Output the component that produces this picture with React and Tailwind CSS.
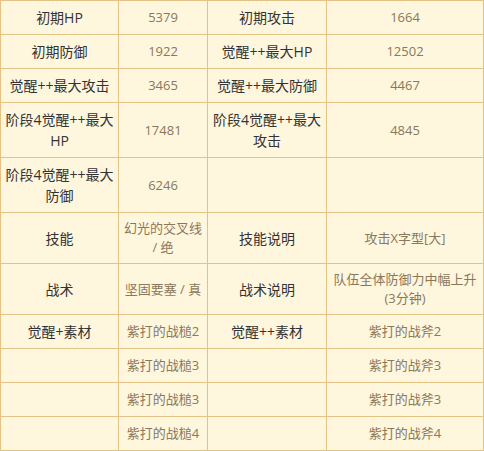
import React from "react";

const rows = [
  ["初期HP", "5379", "初期攻击", "1664"],
  ["初期防御", "1922", "觉醒++最大HP", "12502"],
  ["觉醒++最大攻击", "3465", "觉醒++最大防御", "4467"],
  ["阶段4觉醒++最大HP", "17481", "阶段4觉醒++最大攻击", "4845"],
  ["阶段4觉醒++最大防御", "6246", "", ""],
  ["技能", "幻光的交叉线 / 绝", "技能说明", "攻击X字型[大]"],
  ["战术", "坚固要塞 / 真", "战术说明", "队伍全体防御力中幅上升(3分钟)"],
  ["觉醒+素材", "紫打的战槌2", "觉醒++素材", "紫打的战斧2"],
  ["", "紫打的战槌3", "", "紫打的战斧3"],
  ["", "紫打的战槌3", "", "紫打的战斧3"],
  ["", "紫打的战槌4", "", "紫打的战斧4"],
];

export default function App() {
  return (
    <div
      className="w-[484px] h-[451px] bg-white"
      style={{ fontFamily: '"Open Sans", "Noto Sans CJK SC", sans-serif' }}
    >
      <table className="border-collapse table-fixed w-[483px] bg-[#fff6de]">
        <colgroup>
          <col className="w-[118px]" />
          <col className="w-[89px]" />
          <col className="w-[119px]" />
          <col className="w-[157px]" />
        </colgroup>
        <tbody>
          {rows.map((r, i) => (
            <tr key={i}>
              {r.map((c, j) => {
                const label = j % 2 === 0;
                return (
                  <td
                    key={j}
                    className={
                      label
                        ? "border border-[#e2c384] text-center align-middle px-[1px] py-[6px] text-[14px] leading-[21px] text-[#333333]"
                        : "border border-[#e2c384] text-center align-middle px-[1px] py-[6px] text-[13px] leading-[19px] text-[#8a7859]"
                    }
                  >
                    {c === "" ? "\u00a0" : c}
                  </td>
                );
              })}
            </tr>
          ))}
        </tbody>
      </table>
    </div>
  );
}
